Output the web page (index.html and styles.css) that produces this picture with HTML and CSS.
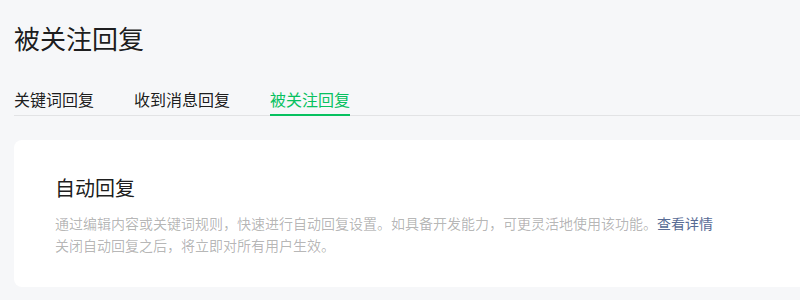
FILE: index.html
```html
<!DOCTYPE html>
<html lang="zh-CN">
<head>
<meta charset="utf-8">
<title>被关注回复</title>
<link rel="stylesheet" href="styles.css">
</head>
<body>
<div class="page">
  <h1 class="page-title">被关注回复</h1>
  <nav class="tabs">
    <a class="tab">关键词回复</a>
    <a class="tab">收到消息回复</a>
    <a class="tab tab-active">被关注回复</a>
  </nav>
  <section class="card">
    <h2 class="card-title">自动回复</h2>
    <p class="card-desc">通过编辑内容或关键词规则，快速进行自动回复设置。如具备开发能力，可更灵活地使用该功能。<a class="link">查看详情</a></p>
    <p class="card-desc">关闭自动回复之后，将立即对所有用户生效。</p>
  </section>
</div>
</body>
</html>
```
FILE: styles.css
```css
html, body {
  margin: 0;
  padding: 0;
  overflow: hidden;
  background: #f6f7f9;
}
body {
  font-family: "Noto Sans CJK SC", "Noto Sans", sans-serif;
  color: rgba(0, 0, 0, 0.9);
}
.page {
  width: 1000px;
  padding: 20px 0 0 14px;
}
.page-title {
  margin: 0;
  font-size: 26px;
  font-weight: 400;
  line-height: 36px;
}
.tabs {
  display: flex;
  gap: 40px;
  margin-top: 31px;
  border-bottom: 1px solid #e2e3e5;
}
.tab {
  font-size: 16px;
  line-height: 24px;
  padding-bottom: 3px;
  border-bottom: 2px solid transparent;
  margin-bottom: -1px;
  cursor: pointer;
}
.tab-active {
  color: #07c160;
  border-bottom-color: #07c160;
}
.card {
  margin-top: 24px;
  background: #fff;
  border-radius: 8px;
  padding: 34px 40px 31px 41px;
}
.card-title {
  margin: 0 0 10px;
  font-size: 20px;
  font-weight: 400;
  line-height: 28px;
}
.card-desc {
  margin: 0;
  font-size: 14px;
  line-height: 22px;
  color: rgba(0, 0, 0, 0.3);
}
.link {
  color: #576b95;
  cursor: pointer;
}
```
